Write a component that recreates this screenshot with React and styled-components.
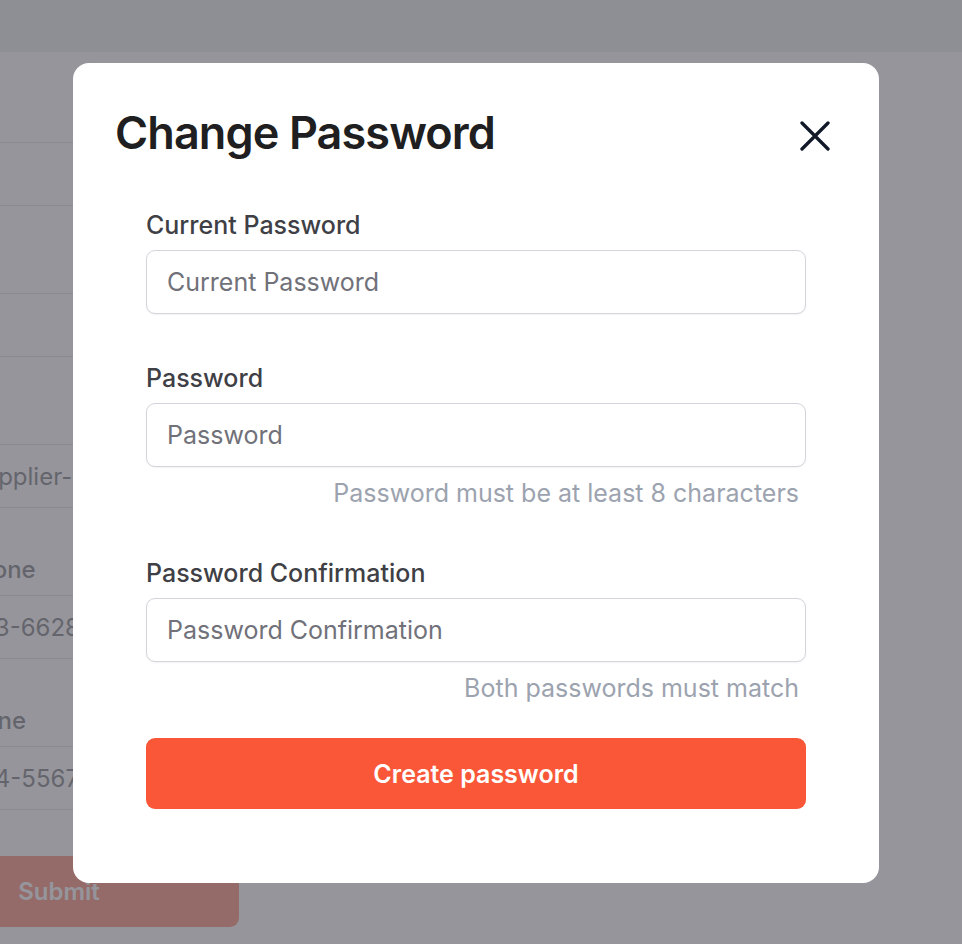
import React from "react";
import styled, { createGlobalStyle } from "styled-components";

const GlobalStyle = createGlobalStyle`
  * { box-sizing: border-box; }
  html, body { margin: 0; height: 100%; overflow: hidden; }
  body {
    font-family: Inter, "Noto Sans", sans-serif;
    background: #ffffff;
  }
`;

/* supplier page that sits behind the dialog */
const Page = styled.div`
  height: 100vh;
  overflow: hidden;
  background: #ffffff;
`;

const TopBar = styled.header`
  height: 52px;
  background: #e4e4e7;
`;

const SupplierForm = styled.form`
  display: flex;
  flex-direction: column;
  gap: 46px;
  width: 600px;
  margin-left: -121px;
  padding-top: 49px;
`;

const PageField = styled.div`
  display: flex;
  flex-direction: column;
  gap: 9px;
`;

const PageLabel = styled.label`
  font-size: 24px;
  line-height: 32px;
  font-weight: 500;
  color: #3f3f46;
`;

const PageInput = styled.input`
  height: 64px;
  border: 1px solid #d4d4d8;
  border-radius: 9px;
  padding: 0 22px;
  font-family: inherit;
  font-size: 24px;
  color: #3f3f46;
  background: #ffffff;
`;

const PageSubmit = styled.button`
  width: 360px;
  height: 71px;
  border: none;
  border-radius: 9px;
  background: #f95738;
  color: #ffffff;
  font-family: inherit;
  font-size: 24px;
  font-weight: 600;
`;

/* dialog */
const Overlay = styled.div`
  position: fixed;
  inset: 0;
  background: rgba(113, 113, 122, 0.75);
  display: flex;
  align-items: flex-start;
  padding: 63px 0 0 73px;
`;

const Dialog = styled.div`
  width: 806px;
  background: #ffffff;
  border-radius: 16px;
  padding: 43px 0 74px;
`;

const DialogHeader = styled.div`
  display: flex;
  align-items: center;
  justify-content: space-between;
  padding: 0 49px 0 42px;
`;

const Title = styled.h2`
  margin: 0;
  font-size: 45px;
  line-height: 54px;
  font-weight: 600;
  letter-spacing: -0.02em;
  color: #1f1f21;
`;

const CloseButton = styled.button`
  width: 30px;
  height: 30px;
  margin-top: 5px;
  padding: 0;
  border: none;
  background: none;
  color: #111827;
  display: flex;
  cursor: pointer;
`;

const DialogBody = styled.div`
  padding: 0 73px;
  margin-top: 49px;
`;

const Fields = styled.div`
  display: flex;
  flex-direction: column;
  gap: 48px;
`;

const Field = styled.div`
  display: flex;
  flex-direction: column;
`;

const Label = styled.label`
  font-size: 25px;
  line-height: 32px;
  font-weight: 500;
  color: #3f3f46;
  margin-bottom: 9px;
`;

const Input = styled.input`
  height: 64px;
  border: 1px solid #d4d4dc;
  border-radius: 9px;
  padding: 0 20px;
  font-family: inherit;
  font-size: 25px;
  color: #27272a;
  background: #ffffff;
  box-shadow: 0 1px 2px rgba(0, 0, 0, 0.05);
  outline: none;

  &::placeholder {
    color: #71717a;
  }
`;

const Hint = styled.p`
  margin: 10px 0 0;
  padding-right: 7px;
  text-align: right;
  font-size: 25px;
  line-height: 32px;
  color: #9ca3af;
`;

const SubmitButton = styled.button`
  width: 100%;
  height: 71px;
  margin-top: 34px;
  border: none;
  border-radius: 9px;
  background: #f95738;
  color: #ffffff;
  font-family: inherit;
  font-size: 25px;
  font-weight: 600;
  cursor: pointer;
`;

const supplierFields = [
  { label: "Name", value: "Acme" },
  { label: "City", value: "Lyon" },
  { label: "Email", value: "mail@supplier-co.com" },
  { label: "Mobile Phone", value: "(415) 553-6628" },
  { label: "Home Phone", value: "(415) 554-5567" },
];

const passwordFields = [
  { label: "Current Password" },
  { label: "Password", hint: "Password must be at least 8 characters" },
  { label: "Password Confirmation", hint: "Both passwords must match" },
];

function CloseIcon() {
  return (
    <svg width="30" height="30" viewBox="0 0 30 30" fill="none">
      <path
        d="M2 2L28 28M28 2L2 28"
        stroke="currentColor"
        strokeWidth="3.3"
        strokeLinecap="round"
      />
    </svg>
  );
}

export default function App() {
  return (
    <>
      <GlobalStyle />
      <Page>
        <TopBar />
        <SupplierForm onSubmit={(e) => e.preventDefault()}>
          {supplierFields.map((f) => (
            <PageField key={f.label}>
              <PageLabel>{f.label}</PageLabel>
              <PageInput defaultValue={f.value} readOnly />
            </PageField>
          ))}
          <PageSubmit type="button">Submit</PageSubmit>
        </SupplierForm>
      </Page>

      <Overlay>
        <Dialog role="dialog">
          <DialogHeader>
            <Title>Change Password</Title>
            <CloseButton aria-label="Close">
              <CloseIcon />
            </CloseButton>
          </DialogHeader>
          <DialogBody>
            <Fields>
              {passwordFields.map((f) => (
                <Field key={f.label}>
                  <Label>{f.label}</Label>
                  <Input type="password" placeholder={f.label} />
                  {f.hint && <Hint>{f.hint}</Hint>}
                </Field>
              ))}
            </Fields>
            <SubmitButton type="button">Create password</SubmitButton>
          </DialogBody>
        </Dialog>
      </Overlay>
    </>
  );
}
